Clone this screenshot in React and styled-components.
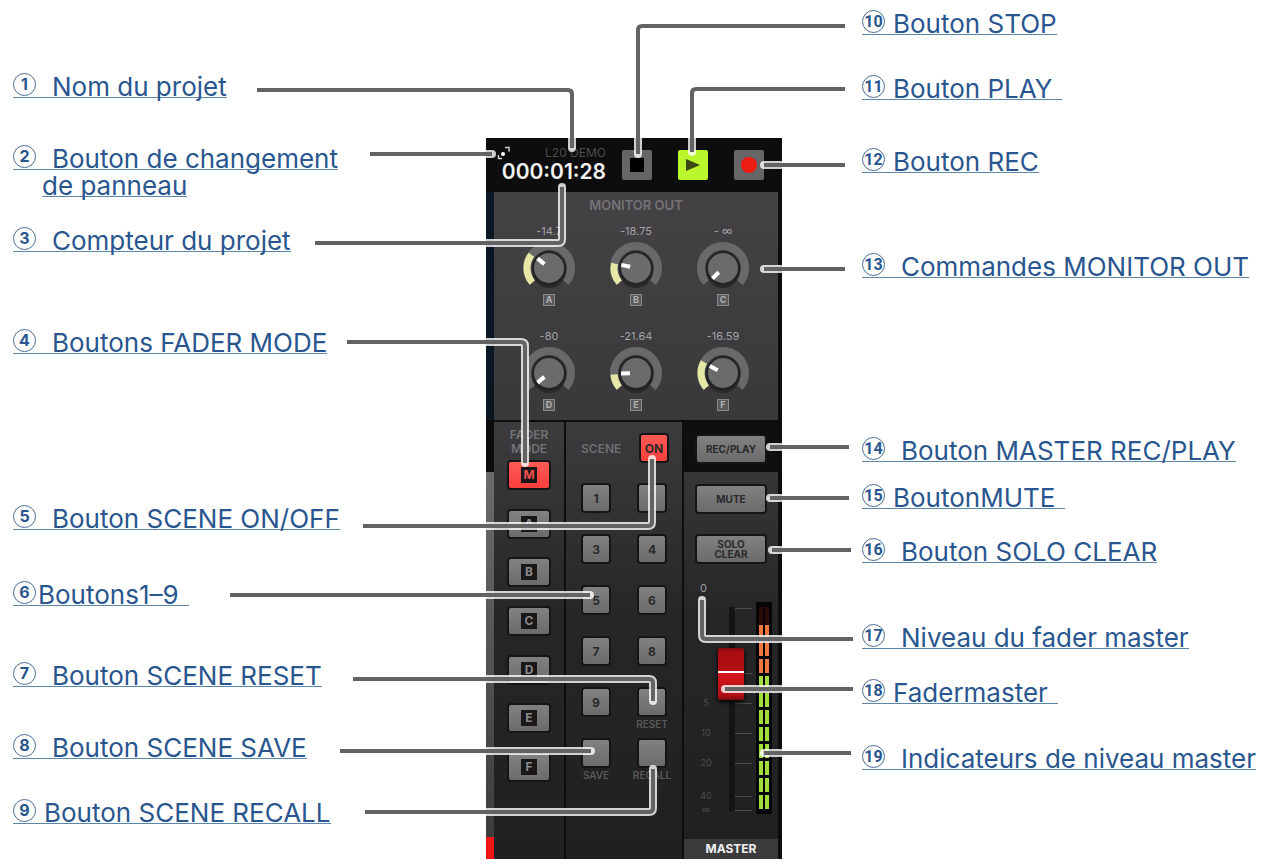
import { useState } from "react";
import styled, { createGlobalStyle } from "styled-components";

const leftLabels = [
  { num: "1", lines: ["Nom du projet"], space: 73 },
  { num: "2", lines: ["Bouton de changement", "de panneau"], space: 47 },
  { num: "3", lines: ["Compteur du projet"], space: 30 },
  { num: "4", lines: ["Boutons FADER MODE"], space: 77 },
  { num: "5", lines: ["Bouton SCENE ON/OFF"], space: 151 },
  { num: "6", lines: ["Boutons1–9"], space: 51, gap: 2, trail: true },
  { num: "7", lines: ["Bouton SCENE RESET"], space: 56 },
  { num: "8", lines: ["Bouton SCENE SAVE"], space: 47 },
  { num: "9", lines: ["Bouton SCENE RECALL"], space: 40, gap: 8 },
];

const rightLabels = [
  { num: "10", lines: ["Bouton STOP"], space: 10, gap: 8 },
  { num: "11", lines: ["Bouton PLAY"], space: 40, gap: 8, trail: true },
  { num: "12", lines: ["Bouton REC"], space: 48, gap: 8 },
  { num: "13", lines: ["Commandes MONITOR OUT"], space: 80 },
  { num: "14", lines: ["Bouton MASTER REC/PLAY"], space: 159 },
  { num: "15", lines: ["BoutonMUTE"], space: 22, gap: 8, trail: true },
  { num: "16", lines: ["Bouton SOLO CLEAR"], space: 29 },
  { num: "17", lines: ["Niveau du fader master"], space: 61 },
  { num: "18", lines: ["Fadermaster"], space: 30, gap: 8, trail: true },
  { num: "19", lines: ["Indicateurs de niveau master"], space: 41 },
];

// level = end of the lit arc, both angles in degrees from the top
const knobs = [
  { name: "A", value: "-14.7", level: -53, angle: -50 },
  { name: "B", value: "-18.75", level: -78, angle: -78 },
  { name: "C", value: "- ∞", level: null, angle: -135 },
  { name: "D", value: "-80", level: null, angle: -130 },
  { name: "E", value: "-21.64", level: -94, angle: -92 },
  { name: "F", value: "-16.59", level: -60, angle: -62 },
];

const faderModes = ["M", "A", "B", "C", "D", "E", "F"];

const sceneButtons = [
  { text: "1" },
  { text: "2" },
  { text: "3" },
  { text: "4" },
  { text: "5" },
  { text: "6" },
  { text: "7" },
  { text: "8" },
  { text: "9" },
  { caption: "RESET" },
  { caption: "SAVE" },
  { caption: "RECALL" },
];

const leaders = [
  "M257 90H568Q572 90 572 94V148",
  "M370 154H492",
  "M315 243H558Q562 243 562 239V187",
  "M347 342H521Q525 342 525 346V463",
  "M363 526H648Q652 526 652 522V459",
  "M230 595H590",
  "M353 679H649Q653 679 653 683V701",
  "M340 751H591",
  "M365 812H649Q653 812 653 808V769",
  "M845 26H642Q638 26 638 30V154",
  "M845 89H696Q692 89 692 93V152",
  "M845 165H764",
  "M845 269H764",
  "M849 447H770",
  "M849 498H770",
  "M851 550H772",
  "M853 639H706Q702 639 702 635V600",
  "M853 689H725",
  "M851 753H764",
];

const ticks = [
  { y: 6 },
  { y: 38 },
  { y: 71 },
  { y: 101, text: "5" },
  { y: 131, text: "10" },
  { y: 161, text: "20" },
  { y: 194, text: "40" },
  { y: 208, text: "∞" },
];

const segments = Array.from({ length: 11 }, (_, i) => 23 + i * 17);

const polar = (deg, r) => {
  const rad = (deg * Math.PI) / 180;
  return `${(30 + r * Math.sin(rad)).toFixed(2)} ${(30 - r * Math.cos(rad)).toFixed(2)}`;
};

const arc = (from, to) =>
  `M${polar(from, 22)}A22 22 0 ${to - from > 180 ? 1 : 0} 1 ${polar(to, 22)}`;

function Callout({ num, lines, space, gap = 16, trail }) {
  return (
    <CalloutItem $space={space}>
      <CalloutLink href={`#item-${num}`}>
        {lines.map((line, i) => (
          <CalloutLine key={line} $indent={i > 0} $gap={gap} $trail={trail}>
            {i === 0 && <Bullet $small={num.length > 1}>{num}</Bullet>}
            {line}
          </CalloutLine>
        ))}
      </CalloutLink>
    </CalloutItem>
  );
}

function Knob({ name, value, level, angle }) {
  return (
    <KnobLabel>
      <KnobValue>{value}</KnobValue>
      <KnobFace>
        <svg width="60" height="60" viewBox="0 0 60 60" aria-hidden="true">
          <path d={arc(-131, 131)} fill="none" stroke="#69696b" strokeWidth="8" />
          {level !== null && (
            <path d={arc(-131, level)} fill="none" stroke="#e6e8a6" strokeWidth="7" />
          )}
          <circle cx="30" cy="33" r="17" fill="#242325" opacity="0.8" />
          <circle cx="30" cy="30" r="17" fill="#232224" />
          <circle cx="30" cy="30" r="15" fill="#6b6b6c" />
          <path d={`M${polar(angle, 6)}L${polar(angle, 15)}`} stroke="#fff" strokeWidth="4" />
        </svg>
        <KnobInput type="range" min="-135" max="135" defaultValue={angle} aria-label={name} />
      </KnobFace>
      <Badge>{name}</Badge>
    </KnobLabel>
  );
}

function MasterFader() {
  const [level, setLevel] = useState(73);

  return (
    <FaderArea>
      <svg width="82" height="220" viewBox="0 0 82 220" aria-hidden="true">
        <rect x="39" y="5" width="6" height="204" fill="#141415" />
        {ticks.map((tick) => (
          <g key={tick.y}>
            <rect x="45" y={tick.y} width="17" height="1" fill="#4d4d4e" />
            {tick.text && (
              <text x="16" y={tick.y + 3} textAnchor="middle" fontSize="9" fill="#4d4d4e">
                {tick.text}
              </text>
            )}
          </g>
        ))}
        <rect x="66" y="0" width="16" height="212" fill="#050505" />
        <rect x="69" y="5" width="4" height="17" fill="#2a0d08" />
        <rect x="75" y="5" width="4" height="17" fill="#2a0d08" />
        {segments.map((y, i) => (
          <g key={y} fill={i < 3 ? "#f2773f" : "#a3dd3c"}>
            <rect x="69" y={y} width="4" height="14" />
            <rect x="75" y={y} width="4" height="14" />
          </g>
        ))}
      </svg>
      <FaderInput
        type="range"
        min="0"
        max="100"
        value={level}
        onChange={(e) => setLevel(Number(e.target.value))}
        aria-label="MASTER"
      />
    </FaderArea>
  );
}

export default function App() {
  const [mode, setMode] = useState("M");
  const [sceneOn, setSceneOn] = useState(true);

  return (
    <>
      <GlobalStyle />
      <Diagram>
        <LeftList>
          {leftLabels.map((label) => (
            <Callout key={label.num} {...label} />
          ))}
        </LeftList>

        <PanelColumn>
          <Panel>
            {/* Transport */}
            <TopBar>
              <Readout>
                <ProjectRow>
                  <PanelSwitch aria-label="Panneau">
                    <svg width="14" height="14" viewBox="0 0 14 14" fill="none" stroke="#d0d0d0">
                      <circle cx="6" cy="8" r="2" fill="#fff" stroke="none" />
                      <path d="M8 1.5H12V5.5M5 12.5H1.5V9" strokeWidth="1.5" />
                    </svg>
                  </PanelSwitch>
                  L20 DEMO
                </ProjectRow>
                <Counter>000:01:28</Counter>
              </Readout>
              <TransportButton aria-label="STOP">
                <svg width="14" height="14" viewBox="0 0 14 14">
                  <rect width="14" height="14" fill="#000" />
                </svg>
              </TransportButton>
              <TransportButton $play aria-label="PLAY">
                <svg width="14" height="14" viewBox="0 0 14 14">
                  <path d="M0 1L14 7L0 13Z" fill="#3c4a12" />
                </svg>
              </TransportButton>
              <TransportButton aria-label="REC">
                <svg width="16" height="16" viewBox="0 0 16 16">
                  <circle cx="8" cy="8" r="8" fill="#ee1c10" />
                </svg>
              </TransportButton>
            </TopBar>

            <PanelBody>
              <Edge>
                <EdgeStrip />
                <EdgeRed />
              </Edge>
              <Sections>
                {/* Monitor out */}
                <MonitorOut>
                  <SectionTitle>MONITOR OUT</SectionTitle>
                  <KnobGrid>
                    {knobs.map((knob) => (
                      <Knob key={knob.name} {...knob} />
                    ))}
                  </KnobGrid>
                </MonitorOut>

                <Lower>
                  {/* Fader mode */}
                  <ModeColumn>
                    <ModeTitle>
                      FADER
                      <br />
                      MODE
                    </ModeTitle>
                    <ModeList>
                      {faderModes.map((name) => (
                        <ModeButton
                          key={name}
                          $active={mode === name}
                          onClick={() => setMode(name)}
                        >
                          <ModeLetter $active={mode === name}>{name}</ModeLetter>
                        </ModeButton>
                      ))}
                    </ModeList>
                  </ModeColumn>

                  {/* Scene */}
                  <SceneColumn>
                    <SceneHeader>
                      SCENE
                      <SceneButton $active={sceneOn} onClick={() => setSceneOn(!sceneOn)}>
                        ON
                      </SceneButton>
                    </SceneHeader>
                    <SceneGrid>
                      {sceneButtons.map(({ text, caption }) => (
                        <SceneCell key={text || caption}>
                          <SceneButton aria-label={caption}>{text}</SceneButton>
                          {caption && <Caption>{caption}</Caption>}
                        </SceneCell>
                      ))}
                    </SceneGrid>
                  </SceneColumn>

                  {/* Master */}
                  <MasterColumn>
                    <RecPlayArea>
                      <WideButton>REC/PLAY</WideButton>
                    </RecPlayArea>
                    <MasterArea>
                      <WideButton>MUTE</WideButton>
                      <WideButton>
                        SOLO
                        <br />
                        CLEAR
                      </WideButton>
                      <FaderBlock>
                        <FaderLevel>0</FaderLevel>
                        <MasterFader />
                      </FaderBlock>
                    </MasterArea>
                    <MasterName>MASTER</MasterName>
                  </MasterColumn>
                </Lower>
              </Sections>
            </PanelBody>
          </Panel>

          <Leaders width="296" height="865" viewBox="486 0 296 865" aria-hidden="true">
            {leaders.map((d) => (
              <g key={d} fill="none">
                <path d={d} stroke="#fff" strokeWidth="8" strokeLinecap="round" opacity="0.8" />
                <path d={d} stroke="#636363" strokeWidth="4" />
              </g>
            ))}
          </Leaders>
        </PanelColumn>

        <RightList>
          {rightLabels.map((label) => (
            <Callout key={label.num} {...label} />
          ))}
        </RightList>
      </Diagram>
    </>
  );
}

const GlobalStyle = createGlobalStyle`
  * {
    box-sizing: border-box;
  }

  body {
    margin: 0;
    background: #fff;
    font-family: Inter, "Liberation Sans", sans-serif;
    overflow-x: hidden;
  }

  button {
    padding: 0;
    border: none;
    font-family: inherit;
    cursor: pointer;
  }
`;

const Diagram = styled.main`
  display: grid;
  grid-template-columns: minmax(0, 486fr) 296px minmax(0, 480fr);
  max-width: 1262px;
  margin: 0 auto;
`;

const LabelList = styled.ul`
  list-style: none;
  margin: 0;
  padding: 0;
  display: flex;
  flex-direction: column;
`;

const LeftList = styled(LabelList)`
  padding-left: 13px;
`;

const RightList = styled(LabelList)`
  padding-left: 80px;
`;

const CalloutItem = styled.li`
  margin-top: ${({ $space }) => $space}px;
`;

const CalloutLink = styled.a`
  display: inline-flex;
  flex-direction: column;
  align-items: flex-start;
  gap: 2px;
  color: #29568f;
  font-size: 26px;
  line-height: 27px;
  text-decoration: none;
  white-space: nowrap;
`;

const CalloutLine = styled.span`
  display: flex;
  gap: ${({ $gap }) => $gap}px;
  height: 25px;
  margin-left: ${({ $indent }) => ($indent ? "29px" : "0")};
  padding-right: ${({ $trail }) => ($trail ? "10px" : "0")};
  border-bottom: 1px solid #5c86a8;
`;

const Bullet = styled.span`
  width: 23px;
  height: 23px;
  border: 1px solid #4b6c93;
  border-radius: 50%;
  text-align: center;
  font-family: ${({ $small }) => ($small ? "Roboto, sans-serif" : "inherit")};
  font-size: 16px;
  font-weight: 700;
  line-height: 21px;
`;

const PanelColumn = styled.div`
  position: relative;
  padding-top: 138px;
`;

const Leaders = styled.svg`
  position: absolute;
  top: 0;
  left: 0;
  overflow: visible;
  pointer-events: none;
`;

const Panel = styled.section`
  background: #0d0d0e;
`;

const TopBar = styled.header`
  display: flex;
  gap: 26px;
  height: 54px;
  padding: 12px 0 0 11px;
`;

const Readout = styled.div`
  width: 109px;
  margin: -4px -10px 0 0;
`;

const ProjectRow = styled.div`
  display: flex;
  justify-content: space-between;
  color: #4c4c4e;
  font-size: 12px;
  line-height: 14px;
`;

const PanelSwitch = styled.button`
  height: 14px;
  background: none;
`;

const Counter = styled.div`
  color: #f2f2f2;
  font-size: 21px;
  font-weight: 600;
  line-height: 24px;
  text-align: right;
`;

const TransportButton = styled.button`
  display: grid;
  place-items: center;
  width: 30px;
  height: 30px;
  border-radius: 2px;
  background: ${({ $play }) => ($play ? "#b9f62c" : "#666667")};
`;

const PanelBody = styled.div`
  display: grid;
  grid-template-columns: 8px 1fr;
  padding-right: 4px;
`;

const Edge = styled.div`
  display: flex;
  flex-direction: column;
  padding-top: 280px;
  background: linear-gradient(#0d1826, #0b1522 228px, #0c0c0d 228px);
`;

const EdgeStrip = styled.div`
  flex: 1;
  background: linear-gradient(#6b6b6c, #3c3c3d);
`;

const EdgeRed = styled.div`
  height: 22px;
  background: #f01414;
`;

const Sections = styled.div`
  display: flex;
  flex-direction: column;
  gap: 2px;
`;

const MonitorOut = styled.div`
  height: 228px;
  padding-top: 6px;
  background: linear-gradient(#444245, #39383a);
`;

const SectionTitle = styled.h2`
  margin: 0;
  color: #747376;
  font-size: 13px;
  font-weight: 600;
  line-height: 14px;
  text-align: center;
`;

const KnobGrid = styled.div`
  display: grid;
  grid-template-columns: repeat(3, 87px);
  grid-auto-rows: 105px;
  justify-content: center;
  padding-top: 12px;
`;

const KnobLabel = styled.label`
  display: flex;
  flex-direction: column;
  align-items: center;
`;

const KnobValue = styled.span`
  color: #a3a2a5;
  font-size: 11px;
  line-height: 14px;
`;

const KnobFace = styled.span`
  display: grid;
  margin-bottom: -4px;

  > * {
    grid-area: 1 / 1;
  }
`;

const KnobInput = styled.input`
  width: 60px;
  height: 60px;
  margin: 0;
  opacity: 0;
  cursor: pointer;
`;

const Badge = styled.span`
  width: 12px;
  height: 12px;
  border: 1px solid #8b8b8d;
  background: #59595b;
  color: #b1b1b3;
  font-size: 9px;
  font-weight: 700;
  line-height: 10px;
  text-align: center;
`;

const Lower = styled.div`
  display: grid;
  grid-template-columns: 70px 116px 1fr;
  gap: 2px;
  height: 437px;
`;

const Column = styled.div`
  display: flex;
  flex-direction: column;
  align-items: center;
  background: linear-gradient(#3c3b3e, #262627 45%, #202021);
`;

const ModeColumn = styled(Column)`
  padding-top: 6px;
`;

const ModeTitle = styled.h2`
  margin: 0;
  color: #737375;
  font-size: 12px;
  font-weight: 600;
  line-height: 14px;
  text-align: center;
`;

const ModeList = styled.div`
  display: flex;
  flex-direction: column;
  justify-content: space-between;
  height: 318px;
  margin-top: 6px;
`;

const Pad = styled.button`
  height: 26px;
  border-radius: 2px;
  box-shadow: 0 0 0 2px #151516;
  background: ${({ $active }) =>
    $active ? "linear-gradient(#ff5a55, #f83f3c)" : "linear-gradient(#818182, #6b6b6c)"};
  color: #2a2a2b;
  font-weight: 700;
`;

const ModeButton = styled(Pad)`
  display: grid;
  place-items: center;
  width: 40px;
`;

const ModeLetter = styled.span`
  width: 16px;
  height: 16px;
  background: #1a1718;
  color: ${({ $active }) => ($active ? "#f4504d" : "#8b8b8c")};
  font-size: 12px;
  line-height: 16px;
`;

const SceneColumn = styled(Column)`
  padding-top: 13px;
`;

const SceneHeader = styled.div`
  display: flex;
  align-items: center;
  justify-content: space-between;
  width: 86px;
  color: #6f6f71;
  font-size: 12px;
  font-weight: 600;
`;

const SceneButton = styled(Pad)`
  width: 26px;
  font-size: 12px;
`;

const SceneGrid = styled.div`
  display: grid;
  grid-template-columns: 26px 26px;
  grid-auto-rows: 51px;
  column-gap: 30px;
  margin-top: 24px;
`;

const SceneCell = styled.div`
  display: flex;
  flex-direction: column;
  align-items: center;
`;

const Caption = styled.span`
  margin-top: 3px;
  color: #59595a;
  font-size: 10px;
  font-weight: 600;
  line-height: 12px;
`;

const MasterColumn = styled(Column)`
  align-items: stretch;
`;

const RecPlayArea = styled.div`
  display: flex;
  justify-content: center;
  height: 50px;
  padding-top: 14px;
  background: #0f0f10;
`;

const MasterArea = styled.div`
  flex: 1;
  display: flex;
  flex-direction: column;
  align-items: center;
  gap: 24px;
  padding-top: 14px;
`;

const WideButton = styled(Pad)`
  width: 68px;
  font-size: 10px;
  line-height: 10px;
`;

const FaderBlock = styled.div`
  display: flex;
  flex-direction: column;
  gap: 8px;
  margin-top: -4px;
`;

const FaderLevel = styled.output`
  padding-left: 10px;
  color: #9a9a9b;
  font-size: 11px;
  line-height: 12px;
`;

const FaderArea = styled.div`
  display: grid;

  > * {
    grid-area: 1 / 1;
  }
`;

const FaderInput = styled.input`
  appearance: none;
  writing-mode: vertical-lr;
  direction: rtl;
  width: 26px;
  height: 204px;
  margin: 5px 0 0 28px;
  background: transparent;
  cursor: pointer;

  &::-webkit-slider-thumb {
    appearance: none;
    width: 26px;
    height: 52px;
    border-radius: 2px;
    background: linear-gradient(#8f0c10 0 3px, #a80d12 3px, #b50f14 23px, #fff 23px 25px, #d8161c 25px, #b01016 47px, #7d0a0e);
    box-shadow: 0 2px 4px #000;
  }
`;

const MasterName = styled.div`
  height: 20px;
  background: #3b3b3c;
  color: #f0f0f0;
  font-size: 12px;
  font-weight: 700;
  line-height: 20px;
  text-align: center;
`;
